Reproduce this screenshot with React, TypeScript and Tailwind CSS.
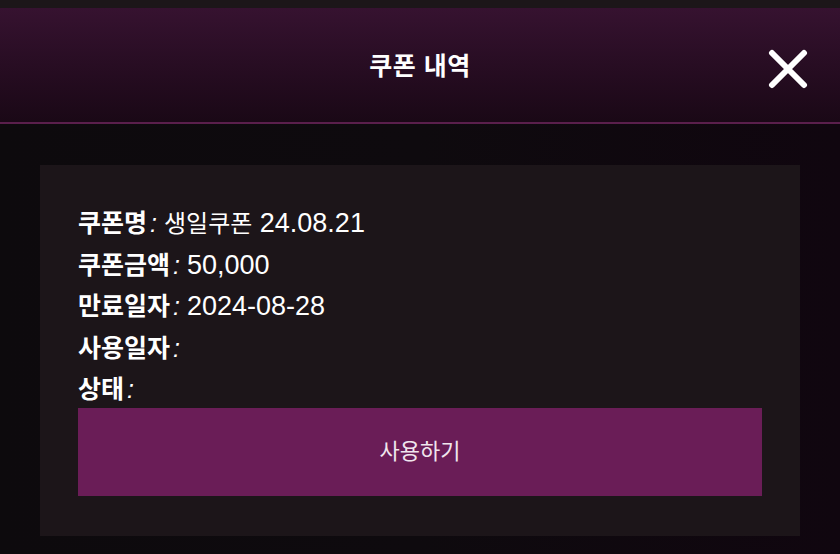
import React from "react";

const font = { fontFamily: '"Liberation Sans", "Noto Sans CJK KR", sans-serif' };

const rows: [string, string][] = [
  ["쿠폰명", "생일쿠폰 24.08.21"],
  ["쿠폰금액", "50,000"],
  ["만료일자", "2024-08-28"],
  ["사용일자", ""],
  ["상태", ""],
];

function Value({ text }: { text: string }) {
  const parts = text.split(/([가-힣]+)/).filter((p) => p.length > 0);
  return (
    <span className="ml-[4px]">
      {parts.map((p, i) =>
        /[가-힣]/.test(p) ? (
          <span key={i} className="text-[24px]">{p}</span>
        ) : (
          <span key={i} className="text-[27px]">{p}</span>
        )
      )}
    </span>
  );
}

export default function App() {
  return (
    <div className="w-[840px] h-[554px] bg-[#0e0a0e] flex flex-col overflow-hidden text-white" style={font}>
      <div className="h-[8px] bg-[#1c1619]" />
      <div className="relative h-[116px] bg-gradient-to-b from-[#361230] to-[#1a0816] border-b-2 border-[#5a1f4c] flex items-center justify-center">
        <span className="text-[25px] font-bold tracking-[0.5px] mt-[4px]">쿠폰 내역</span>
        <svg className="absolute right-[32px] top-[41px]" width="40" height="40" viewBox="0 0 40 40">
          <path d="M4 4 L36 36 M36 4 L4 36" stroke="#ffffff" strokeWidth="6" strokeLinecap="round" />
        </svg>
      </div>
      <div className="flex-1 bg-gradient-to-r from-[#0d0a0d] via-[#0e0a0e] to-[#10060f] pt-[41px] px-[40px]">
        <div className="bg-[#1c1519] h-[371px] px-[38px] pt-[38px]">
          <div className="flex flex-col">
            {rows.map(([k, v]) => (
              <div key={k} className="h-[41.5px] flex items-center text-[25px] leading-none">
                <span className="font-bold">{k}</span>
                <span className="italic mx-[3px]">:</span>
                <Value text={v} />
              </div>
            ))}
          </div>
          <button className="mt-[-3px] w-[684px] h-[88px] bg-[#6a1d57] text-[22px] text-[#f0e6ee] flex items-center justify-center">
            사용하기
          </button>
        </div>
      </div>
    </div>
  );
}
